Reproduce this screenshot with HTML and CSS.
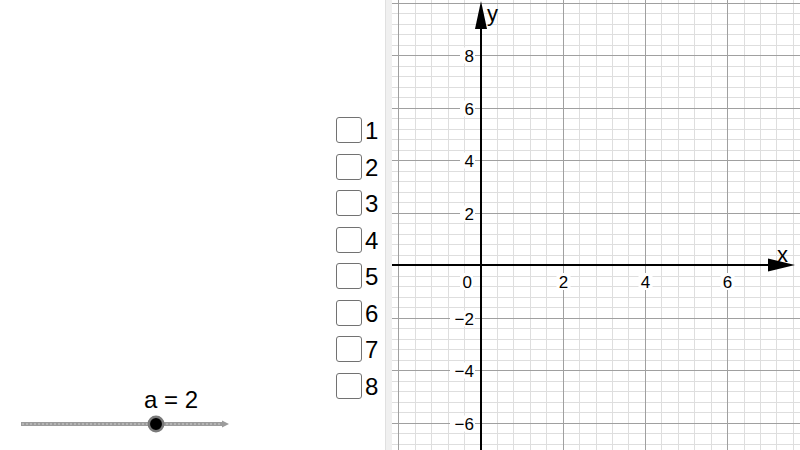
FILE: index.html
```html
<!DOCTYPE html>
<html>
<head>
<meta charset="utf-8">
<link rel="stylesheet" href="styles.css">
</head>
<body>
<div class="app">
  <div class="left">
    <div class="slider-col">
      <div class="slider-label">a = 2</div>
      <svg class="slider" width="335" height="20" viewBox="0 0 335 20">
        <line x1="21" y1="10" x2="224" y2="10" stroke="#9c9c9c" stroke-width="4"/>
        <line x1="22" y1="10" x2="222" y2="10" stroke="#cdcdcd" stroke-width="1.2" stroke-dasharray="2 2"/>
        <polygon points="222,6.5 229,10 222,13.5" fill="#9c9c9c"/>
        <circle cx="156" cy="10" r="7.2" fill="#000" stroke="#7a7a7a" stroke-width="2.5"/>
      </svg>
    </div>
    <div class="checks">
      <div class="check"><span class="box"></span><span class="num">1</span></div>
      <div class="check"><span class="box"></span><span class="num">2</span></div>
      <div class="check"><span class="box"></span><span class="num">3</span></div>
      <div class="check"><span class="box"></span><span class="num">4</span></div>
      <div class="check"><span class="box"></span><span class="num">5</span></div>
      <div class="check"><span class="box"></span><span class="num">6</span></div>
      <div class="check"><span class="box"></span><span class="num">7</span></div>
      <div class="check"><span class="box"></span><span class="num">8</span></div>
    </div>
  </div>
  <div class="divider"></div>
  <div class="graph">
    <svg width="408" height="450" viewBox="392 0 408 450">
      <rect x="392" y="0" width="408" height="450" fill="#fff"/>
      <path stroke="#dedede" stroke-width="1" fill="none" d="M415.5 0V450M431.5 0V450M448.5 0V450M464.5 0V450M497.5 0V450M513.5 0V450M530.5 0V450M546.5 0V450M579.5 0V450M596.5 0V450M612.5 0V450M628.5 0V450M661.5 0V450M678.5 0V450M694.5 0V450M711.5 0V450M744.5 0V450M760.5 0V450M776.5 0V450M793.5 0V450M392 13.5H800M392 24.5H800M392 34.5H800M392 45.5H800M392 66.5H800M392 76.5H800M392 87.5H800M392 97.5H800M392 118.5H800M392 129.5H800M392 139.5H800M392 150.5H800M392 171.5H800M392 181.5H800M392 192.5H800M392 202.5H800M392 223.5H800M392 234.5H800M392 244.5H800M392 255.5H800M392 276.5H800M392 286.5H800M392 297.5H800M392 307.5H800M392 328.5H800M392 339.5H800M392 349.5H800M392 360.5H800M392 381.5H800M392 391.5H800M392 402.5H800M392 412.5H800M392 433.5H800M392 444.5H800"/>
      <path stroke="#a0a0a0" stroke-width="1" fill="none" d="M398.5 0V450M563.5 0V450M645.5 0V450M727.5 0V450M392 3.5H800M392 55.5H800M392 108.5H800M392 160.5H800M392 213.5H800M392 318.5H800M392 370.5H800M392 423.5H800"/>
      <g fill="#fff">
        <rect x="460" y="47.5" width="15" height="16"/>
        <rect x="460" y="100.5" width="15" height="16"/>
        <rect x="460" y="152.5" width="15" height="16"/>
        <rect x="460" y="205.5" width="15" height="16"/>
        <rect x="450" y="310.5" width="25" height="16"/>
        <rect x="450" y="362.5" width="25" height="16"/>
        <rect x="450" y="415.5" width="25" height="16"/>
        <rect x="460" y="273" width="13" height="17"/>
        <rect x="556.5" y="273" width="14" height="17"/>
        <rect x="638.5" y="273" width="14" height="17"/>
        <rect x="720.5" y="273" width="14" height="17"/>
      </g>
      <line x1="392" y1="265" x2="790" y2="265" stroke="#000" stroke-width="2"/>
      <line x1="481" y1="10" x2="481" y2="450" stroke="#000" stroke-width="2"/>
      <polygon points="481,1 475,29 487,29" fill="#000"/>
      <polygon points="795,265 768,258.5 768,271.5" fill="#000"/>
      <g class="ticklabel">
        <text x="474" y="62" text-anchor="end">8</text>
        <text x="474" y="115" text-anchor="end">6</text>
        <text x="474" y="167" text-anchor="end">4</text>
        <text x="474" y="220" text-anchor="end">2</text>
        <text x="474" y="325" text-anchor="end">−2</text>
        <text x="474" y="377" text-anchor="end">−4</text>
        <text x="474" y="430" text-anchor="end">−6</text>
        <text x="472" y="288" text-anchor="end">0</text>
        <text x="563.5" y="288" text-anchor="middle">2</text>
        <text x="645.5" y="288" text-anchor="middle">4</text>
        <text x="727.5" y="288" text-anchor="middle">6</text>
      </g>
      <g class="axislabel">
        <text x="487" y="21">y</text>
        <text x="777" y="262">x</text>
      </g>
    </svg>
  </div>
</div>
</body>
</html>
```
FILE: styles.css
```css
html, body {
  margin: 0;
  padding: 0;
  background: #fff;
}
body {
  font-family: "Liberation Sans", Arial, sans-serif;
  color: #000;
}
.app {
  display: flex;
  width: 800px;
  height: 450px;
  overflow: hidden;
}
.left {
  flex: 0 0 385px;
  display: flex;
  height: 450px;
  background: #fff;
}
.slider-col {
  flex: 0 0 335px;
  display: flex;
  flex-direction: column;
  justify-content: flex-end;
  padding-bottom: 16.5px;
  box-sizing: border-box;
}
.slider-label {
  margin-left: 144px;
  margin-bottom: 1px;
  height: 26px;
  font-size: 24px;
  line-height: 26px;
  white-space: pre;
}
.slider {
  display: block;
}
.checks {
  display: flex;
  flex-direction: column;
  gap: 10.5px;
  padding-top: 117px;
  padding-left: 1px;
}
.check {
  display: flex;
  align-items: flex-start;
  height: 26px;
}
.box {
  width: 26px;
  height: 26px;
  box-sizing: border-box;
  border: 1px solid #727272;
  border-radius: 3px;
  background: #fff;
}
.num {
  margin-left: 3px;
  padding-top: 1px;
  font-size: 24px;
  line-height: 26px;
}
.divider {
  flex: 0 0 6px;
  background: #f0f0f0;
  border-left: 1px solid #e0e0e0;
}
.graph {
  flex: 0 0 408px;
  height: 450px;
}
.graph svg {
  display: block;
}
.ticklabel text {
  font-family: "Liberation Sans", Arial, sans-serif;
  font-size: 17px;
  fill: #000;
}
.axislabel text {
  font-family: "Liberation Sans", Arial, sans-serif;
  font-size: 22px;
  fill: #000;
}
```
